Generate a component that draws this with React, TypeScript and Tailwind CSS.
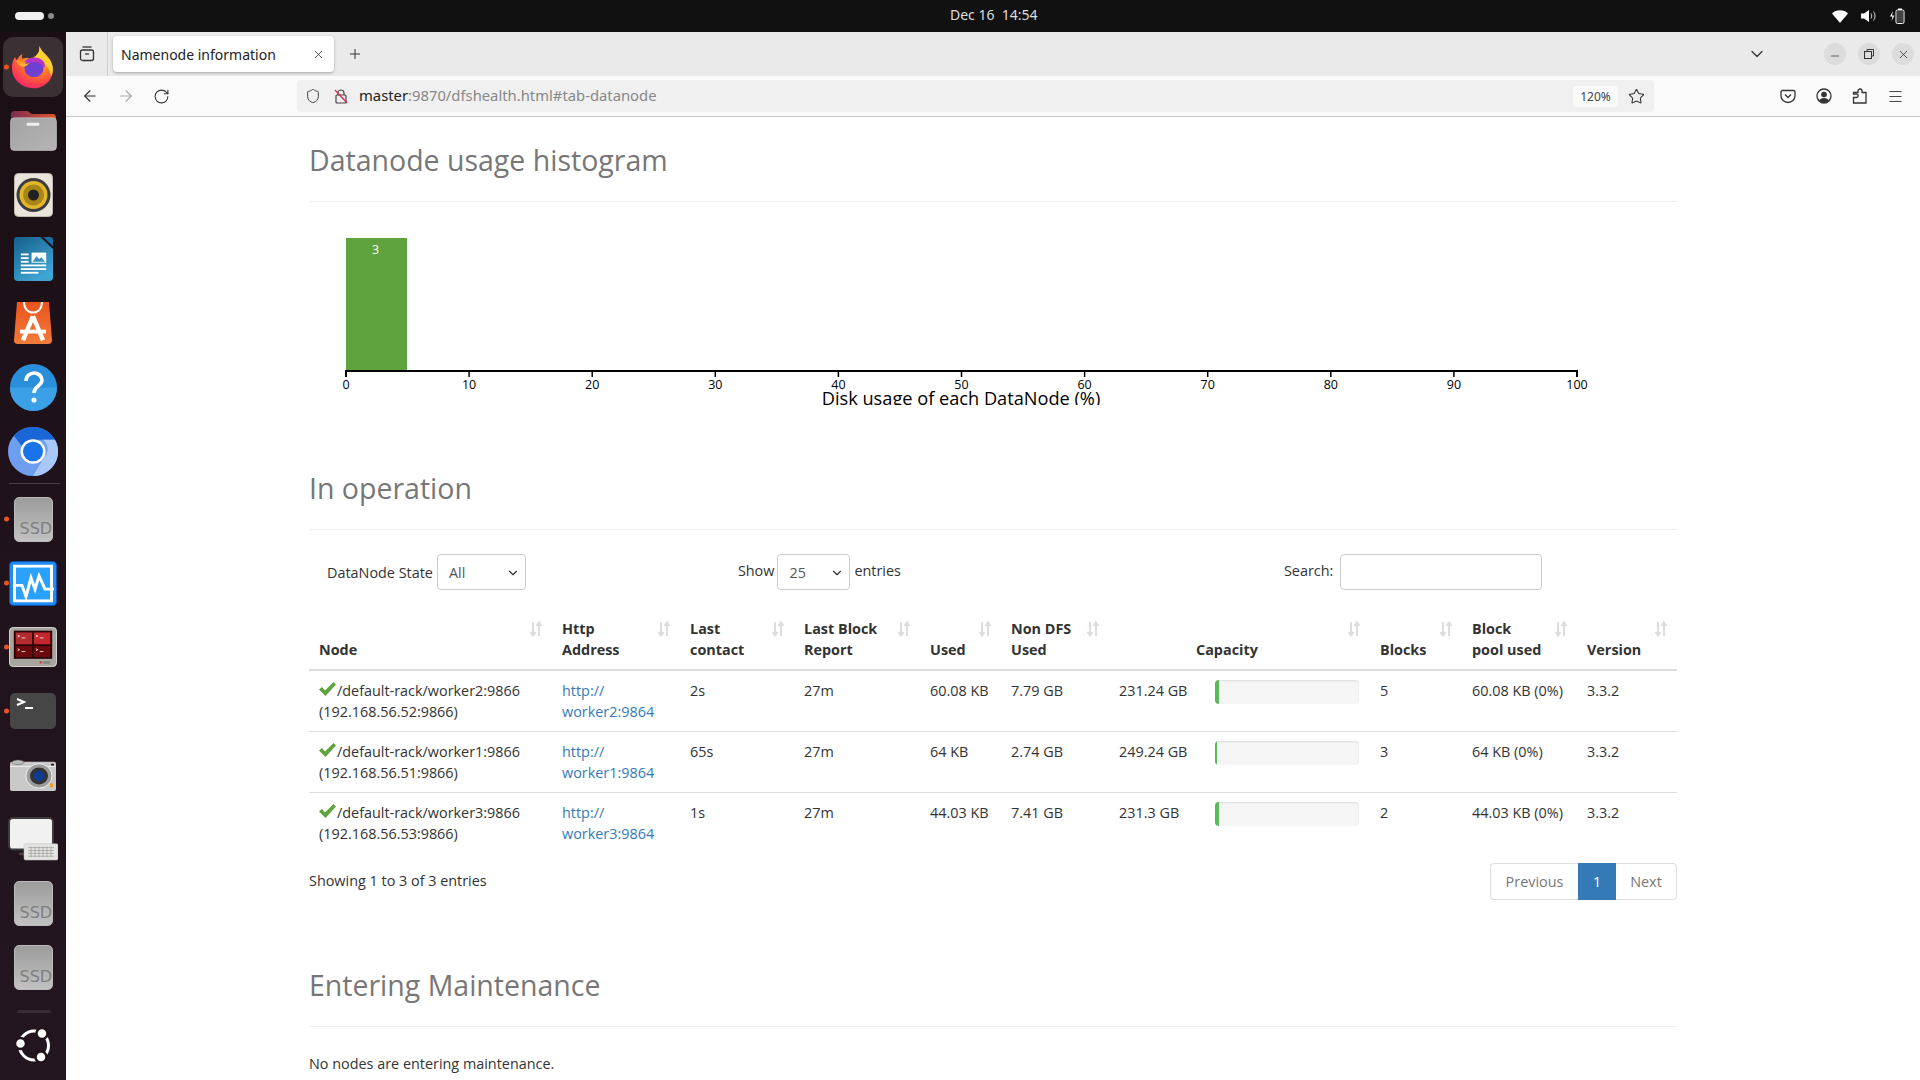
import { ArrowLeft, ArrowRight, ChevronDown, Menu, Minus, Plus, RotateCw, Shield, Star, X } from "lucide-react";

const rows = [
  { node: "worker2", ip: "192.168.56.52", contact: "2s", used: "60.08 KB", nonDfs: "7.79 GB", cap: "231.24 GB", fill: 4, blocks: "5", pool: "60.08 KB (0%)" },
  { node: "worker1", ip: "192.168.56.51", contact: "65s", used: "64 KB", nonDfs: "2.74 GB", cap: "249.24 GB", fill: 2, blocks: "3", pool: "64 KB (0%)" },
  { node: "worker3", ip: "192.168.56.53", contact: "1s", used: "44.03 KB", nonDfs: "7.41 GB", cap: "231.3 GB", fill: 4, blocks: "2", pool: "44.03 KB (0%)" },
];

const ticks = [0, 10, 20, 30, 40, 50, 60, 70, 80, 90, 100];

function Dot() {
  return <span className="absolute left-[4px] top-1/2 h-[5px] w-[5px] -translate-y-1/2 rounded-full bg-[#e95420]" />;
}

function DockItem({ children, running, active }: { children: React.ReactNode; running?: boolean; active?: boolean }) {
  return (
    <div className="relative flex h-[64px] w-[66px] shrink-0 items-center justify-center">
      {active && <span className="absolute left-[3px] top-[2px] h-[60px] w-[60px] rounded-[10px] bg-[#3b3034]" />}
      {running && <Dot />}
      <span className="relative flex">{children}</span>
    </div>
  );
}

function FirefoxIcon() {
  return (
    <svg width="44" height="44" viewBox="0 0 46 48" preserveAspectRatio="none">
      <defs>
        <radialGradient id="ffa" cx="0.65" cy="0.2" r="0.95">
          <stop offset="0" stopColor="#ffde3f" />
          <stop offset="0.4" stopColor="#ff8a1e" />
          <stop offset="0.75" stopColor="#ff3d50" />
          <stop offset="1" stopColor="#e31587" />
        </radialGradient>
      </defs>
      <path d="M30 1c1 6 6 8 10 14 5 8 5 17 0 24-5 6-12 9-18 8C10 46 1 37 1 25c0-5 1-9 3-12l2 4c1-3 3-6 6-7-1 3-1 4 0 5 3-1 6-1 9 0 6-3 9-7 9-14z" fill="url(#ffa)" />
      <path d="M30 1c1 6 6 8 10 14 4 6 5 13 2 19-1-6-5-13-11-17-2-5-2-11-1-16z" fill="#ffcf2e" />
      <path d="M5 17c4-1 7 0 10 3l-3 4c-3-1-5-3-7-7z" fill="#ff9a2b" />
      <circle cx="24" cy="25" r="10" fill="#6e3fd0" />
      <path d="M14 18c4-5 14-6 19-1 2 2 3 5 2 8-3-5-8-7-13-6-3 0-6 0-8-1z" fill="#b833c9" />
      <path d="M8 20c4 1 8 1 12-1l-4 4c-3 1-6 0-8-3z" fill="#ffb52e" />
    </svg>
  );
}

function FolderIcon() {
  return (
    <svg width="47" height="40" viewBox="0 0 48 41" preserveAspectRatio="none">
      <defs>
        <linearGradient id="fold" x1="0" x2="1" y1="0" y2="0">
          <stop offset="0" stopColor="#7a2c52" />
          <stop offset="1" stopColor="#e4572a" />
        </linearGradient>
        <linearGradient id="foldb" x1="0" x2="1" y1="0" y2="1">
          <stop offset="0" stopColor="#a3a3a3" />
          <stop offset="1" stopColor="#b4b4b4" />
        </linearGradient>
      </defs>
      <path d="M1 4a4 4 0 0 1 4-4h13l4 3h21a4 4 0 0 1 4 4v10H1z" fill="url(#fold)" />
      <rect x="0.5" y="7" width="47" height="33.500" rx="4" fill="url(#foldb)" stroke="#ccc" strokeWidth="0.6" />
      <rect x="17" y="12" width="13" height="3" rx="1" fill="#eee" />
    </svg>
  );
}

function RhythmboxIcon() {
  return (
    <svg width="39" height="44" viewBox="0 0 39 44">
      <rect x="0.5" y="0.5" width="38" height="43" rx="4" fill="#e9e5da" stroke="#bdb9ae" />
      <circle cx="19.500" cy="22" r="17" fill="#3c3c3c" />
      <circle cx="19.500" cy="22" r="14" fill="#e2b62a" />
      <circle cx="19.500" cy="22" r="10.500" fill="#a88518" />
      <circle cx="19.500" cy="22" r="5.500" fill="#222" />
    </svg>
  );
}

function WriterIcon() {
  return (
    <svg width="39" height="44" viewBox="0 0 40 48" preserveAspectRatio="none">
      <defs>
        <linearGradient id="wr" x1="0" x2="0.6" y1="0" y2="1">
          <stop offset="0" stopColor="#165f8c" />
          <stop offset="1" stopColor="#3fa6d4" />
        </linearGradient>
      </defs>
      <path d="M3 0h24l13 13v31a4 4 0 0 1-4 4H4a4 4 0 0 1-4-4V3a3 3 0 0 1 3-3z" fill="url(#wr)" />
      <path d="M30 0h7a3 3 0 0 1 3 3v7z" fill="#1a6fa0" />
      <rect x="7" y="18" width="8" height="2" fill="#fff" />
      <rect x="7" y="22" width="8" height="2" fill="#fff" />
      <rect x="7" y="26" width="8" height="2" fill="#fff" />
      <rect x="18" y="17" width="15" height="11" fill="#fff" />
      <path d="M19 27l4-6 3 3 2-2 4 5z" fill="#3a8fbf" />
      <rect x="7" y="30" width="26" height="2" fill="#fff" />
      <rect x="7" y="34" width="26" height="2" fill="#fff" />
      <rect x="7" y="38" width="18" height="2" fill="#fff" />
    </svg>
  );
}

function StoreIcon() {
  return (
    <svg width="38" height="42" viewBox="0 0 38 44" preserveAspectRatio="none">
      <defs>
        <linearGradient id="st" x1="0" x2="0" y1="0" y2="1">
          <stop offset="0" stopColor="#e9541e" />
          <stop offset="1" stopColor="#f47b3a" />
        </linearGradient>
      </defs>
      <path d="M3 0h32l3 40a4 4 0 0 1-4 4H4a4 4 0 0 1-4-4z" fill="url(#st)" />
      <path d="M10 0c0 7 4 11 9 11s9-4 9-11" fill="none" stroke="#fff" strokeWidth="2" />
      <path d="M19 15L9 40M19 15l10 25" stroke="#fff" strokeWidth="4.5" fill="none" />
      <path d="M6 31h26" stroke="#fff" strokeWidth="4" />
    </svg>
  );
}

function HelpIcon() {
  return (
    <svg width="47" height="47" viewBox="0 0 47 47">
      <circle cx="23.5" cy="23.5" r="23.5" fill="#2a8fdb" />
      <path d="M0 23.5a23.5 23.5 0 0 0 47 0z" fill="#3ba0e6" />
      <path d="M16 17c0-5 4-8 8-8s8 3 8 7c0 6-8 6-8 13" fill="none" stroke="#fff" strokeWidth="3.6" />
      <circle cx="24" cy="36" r="2.6" fill="#fff" />
    </svg>
  );
}

function ChromiumIcon() {
  return (
    <svg width="50" height="49" viewBox="0 0 50 50" preserveAspectRatio="none">
      <circle cx="25" cy="25" r="25" fill="#6d9eef" />
      <path d="M25 0a25 25 0 0 1 22 13H25a12 12 0 0 0-11 7L6 9a25 25 0 0 1 19-9z" fill="#1a66d6" />
      <path d="M47 13a25 25 0 0 1-22 37l11-19a12 12 0 0 0-1-18z" fill="#a9c8f8" />
      <circle cx="25" cy="25" r="12.5" fill="#fff" />
      <circle cx="25" cy="25" r="10" fill="#1a73e8" />
    </svg>
  );
}

function SsdIcon() {
  return (
    <div className="relative h-[45px] w-[39px] overflow-hidden rounded-[5px] border border-[#bbb] bg-gradient-to-b from-[#9c9c9c] to-[#c2c2c2]">
      <span className="absolute bottom-[4px] left-[5px] font-['DejaVu_Sans'] text-[16px] leading-none text-[#808080]">SSD</span>
    </div>
  );
}

function MonitorIcon() {
  return (
    <svg width="48" height="45" viewBox="0 0 48 48" preserveAspectRatio="none">
      <rect x="0.5" y="0.5" width="47" height="47" rx="4" fill="#1f8cf5" stroke="#0b4fb0" />
      <rect x="4" y="4" width="40" height="40" fill="#fff" />
      <rect x="7" y="7" width="34" height="34" fill="#2aa1ff" />
      <path d="M7 26h6l4 12 5-20 4 12 4-14 6 14h9" fill="none" stroke="#fff" strokeWidth="3" />
    </svg>
  );
}

function TermGridIcon() {
  return (
    <svg width="48" height="40" viewBox="0 0 50 44" preserveAspectRatio="none">
      <rect x="0.5" y="0.5" width="49" height="43" rx="4" fill="#a8a69e" stroke="#ddd" />
      <rect x="5" y="4" width="40" height="31" fill="#2c0508" />
      <rect x="7" y="6" width="17" height="13" fill="#b52c30" />
      <rect x="26" y="6" width="17" height="13" fill="#c4282e" />
      <rect x="7" y="21" width="17" height="12" fill="#6d0a0e" />
      <rect x="26" y="21" width="17" height="12" fill="#6d0a0e" />
      <path d="M9 9l2 1-2 1M13 12h4M28 9l2 1-2 1M32 12h4M9 24l2 1-2 1M13 27h4M28 24l2 1-2 1M32 27h4" stroke="#fff" strokeWidth="0.8" fill="none" />
      <circle cx="33" cy="39" r="1.2" fill="#d22" />
      <rect x="35" y="37.5" width="8" height="3" fill="#8a8880" />
    </svg>
  );
}

function TerminalIcon() {
  return (
    <svg width="46" height="36" viewBox="0 0 46 36">
      <rect width="46" height="36" rx="5" fill="#464646" />
      <path d="M7 6l7 3-7 3" fill="none" stroke="#fff" strokeWidth="2" />
      <path d="M15 15h8" stroke="#fff" strokeWidth="2" />
    </svg>
  );
}

function CameraIcon() {
  return (
    <svg width="46" height="32" viewBox="0 0 46 34" preserveAspectRatio="none">
      <rect x="0" y="3" width="46" height="31" rx="2" fill="#c9c9c9" />
      <path d="M0 8h46" stroke="#eee" />
      <ellipse cx="8" cy="3.5" rx="6" ry="2.5" fill="#bbb" stroke="#555" strokeWidth="0.5" />
      <circle cx="29" cy="18" r="13" fill="#9c9c9c" stroke="#eee" />
      <circle cx="29" cy="18" r="9" fill="#333" />
      <circle cx="29" cy="18" r="5.5" fill="#0d3c92" />
      <rect x="40" y="26" width="3" height="4" fill="#e8a020" />
      <rect x="41" y="5" width="3" height="2" fill="#222" />
    </svg>
  );
}

function ScreenIcon() {
  return (
    <svg width="50" height="44" viewBox="0 0 50 46" preserveAspectRatio="none">
      <rect x="1" y="1" width="44" height="33" rx="4" fill="#f1f1f1" stroke="#3c3c3c" strokeWidth="2" />
      <rect x="11" y="37" width="14" height="3" rx="1" fill="#444" />
      <rect x="16" y="28" width="34" height="17" rx="1.5" fill="#e4e4e2" stroke="#bbb" strokeWidth="0.5" />
      <path d="M20 32h26M20 35h26M20 38h26M20 41h26M23 31v11M27 31v11M31 31v11M35 31v11M39 31v11M43 31v11" stroke="#9a9a98" strokeWidth="0.7" />
    </svg>
  );
}

function UbuntuIcon() {
  return (
    <svg width="38" height="35" viewBox="0 0 38 35">
      <circle cx="20" cy="17.500" r="14.500" fill="none" stroke="#fff" strokeWidth="3" />
      <circle cx="28" cy="5.500" r="5.500" fill="#fff" stroke="#21131c" strokeWidth="2.500" />
      <circle cx="6.500" cy="15.500" r="5.500" fill="#fff" stroke="#21131c" strokeWidth="2.500" />
      <circle cx="27" cy="29" r="5.500" fill="#fff" stroke="#21131c" strokeWidth="2.500" />
    </svg>
  );
}

function Dock() {
  return (
    <div className="flex w-[66px] shrink-0 flex-col bg-gradient-to-b from-[#1b0f15] to-[#241621] pt-[3px]">
      <DockItem running active><FirefoxIcon /></DockItem>
      <DockItem><FolderIcon /></DockItem>
      <DockItem><RhythmboxIcon /></DockItem>
      <DockItem><WriterIcon /></DockItem>
      <DockItem><StoreIcon /></DockItem>
      <DockItem><HelpIcon /></DockItem>
      <DockItem><ChromiumIcon /></DockItem>
      <div className="relative h-[4px] shrink-0">
        <span className="absolute top-0 left-[9px] h-px w-[51px] bg-[#4a3d45]" />
      </div>
      <DockItem running><SsdIcon /></DockItem>
      <DockItem running><MonitorIcon /></DockItem>
      <DockItem running><TermGridIcon /></DockItem>
      <DockItem running><TerminalIcon /></DockItem>
      <DockItem><CameraIcon /></DockItem>
      <DockItem><ScreenIcon /></DockItem>
      <DockItem><SsdIcon /></DockItem>
      <DockItem><SsdIcon /></DockItem>
      <div className="relative h-[14px] shrink-0">
        <span className="absolute top-[11px] left-[17px] h-[3px] w-[34px] rounded-t-[3px] bg-[#3a2b35]" />
      </div>
      <DockItem><UbuntuIcon /></DockItem>
    </div>
  );
}

function TopBar() {
  return (
    <div className="relative flex h-[32px] shrink-0 items-center justify-between bg-[#111111] pl-[15px] pr-[15px]">
      <div className="flex items-center gap-[4px]">
        <span className="h-[8px] w-[29px] rounded-full bg-[#f0f0f0]" />
        <span className="h-[6px] w-[6px] rounded-full bg-[#8a8a8a]" />
      </div>
      <div className="absolute left-[950px] top-[4px] font-['Noto_Sans'] text-[14px] leading-[22px] text-[#dddddd] whitespace-pre">Dec 16  14:54</div>
      <div className="flex items-center gap-[13px]">
        <svg width="16" height="13" viewBox="0 0 16 13"><path d="M0 3.5C4-.8 12-.8 16 3.5L8 13z" fill="#fff" /></svg>
        <svg width="15" height="14" viewBox="0 0 15 14" fill="none">
          <path d="M0 4.5h3L8 1v12L3 9.500H0z" fill="#fff" />
          <path d="M10 4.500c1 1.500 1 3.500 0 5M12.500 2.500c2 3 2 6 0 9" stroke="#ddd" />
        </svg>
        <svg width="16" height="16" viewBox="0 0 16 16" fill="none">
          <path d="M4 3L1 8.500h2.500L2.500 13 5.500 7.500H3z" fill="#fff" />
          <rect x="7" y="2" width="8" height="13.500" rx="1.500" stroke="#fff" />
          <rect x="9" y="0.500" width="4" height="1.500" fill="#fff" />
          <rect x="8" y="3" width="6" height="11.500" rx="0.500" fill="#ddd" opacity="0.25" />
        </svg>
      </div>
    </div>
  );
}

function WinButton({ children }: { children: React.ReactNode }) {
  return <span className="flex h-[22px] w-[22px] items-center justify-center rounded-full bg-[#dcdcdc] text-[#333]">{children}</span>;
}

function TabBar() {
  return (
    <div className="relative flex h-[44px] shrink-0 items-center bg-[#eaeaea]">
      <div className="flex h-full w-[42px] items-center justify-center border-r border-[#cfcfcf]">
        <svg width="16" height="16" viewBox="0 0 16 16" fill="none" stroke="#333" strokeWidth="1.300">
          <path d="M3.500 1h9" />
          <rect x="1.500" y="4" width="13" height="10.500" rx="2" />
          <path d="M6 8h4" />
        </svg>
      </div>
      <div className="ml-[5px] flex h-[36px] w-[221px] items-center justify-between rounded-[4px] bg-white pl-[8px] pr-[9px] shadow-[0_1px_3px_rgba(0,0,0,0.3)]">
        <span className="font-['Noto_Sans'] text-[14px] text-[#222]">Namenode information</span>
        <X size={13} strokeWidth={1.500} className="text-[#333]" />
      </div>
      <Plus size={16} strokeWidth={1.500} className="ml-[13px] text-[#333]" />
      <div className="ml-auto flex items-center pr-[6px]">
        <ChevronDown size={20} strokeWidth={1.500} className="mr-[57px] text-[#333]" />
        <div className="flex gap-[12px]">
          <WinButton><Minus size={12} strokeWidth={1.500} className="translate-y-[2px]" /></WinButton>
          <WinButton>
            <svg width="10" height="10" viewBox="0 0 10 10" fill="none" stroke="#333"><rect x="0.500" y="2.500" width="7" height="7" /><path d="M3 2.500V0.500h6.500V7H7.500" /></svg>
          </WinButton>
          <WinButton><X size={13} strokeWidth={1.500} /></WinButton>
        </div>
      </div>
    </div>
  );
}

function Toolbar() {
  return (
    <div className="flex h-[41px] shrink-0 items-center border-b border-[#c9c9c9] bg-[#fafafa]">
      <ArrowLeft size={18} strokeWidth={1.500} className="ml-[15px] text-[#333]" />
      <ArrowRight size={18} strokeWidth={1.500} className="ml-[18px] text-[#aaa]" />
      <RotateCw size={17} strokeWidth={1.500} className="ml-[18px] text-[#333]" />
      <div className="ml-[127px] flex h-[32px] w-[1357px] items-center rounded-[4px] bg-[#f0f0f0]">
        <Shield size={16} strokeWidth={1.500} className="ml-[8px] text-[#444]" />
        <svg width="14" height="16" viewBox="0 0 14 16" fill="none" className="ml-[13px]">
          <rect x="2" y="7" width="10" height="8" rx="1" stroke="#444" strokeWidth="1.200" />
          <path d="M4 7V5a3 3 0 0 1 6 0v2" stroke="#444" strokeWidth="1.200" />
          <path d="M1 2l12 13" stroke="#e22850" strokeWidth="1.300" />
        </svg>
        <span className="ml-[11px] -translate-y-px font-['Noto_Sans'] text-[14.800px] text-[#888]"><span className="text-[#222]">master</span>:9870/dfshealth.html#tab-datanode</span>
        <span className="ml-auto flex h-[21px] w-[45px] items-center justify-center rounded-[4px] bg-[#fafafa] font-['Noto_Sans'] text-[12px] text-[#444]">120%</span>
        <Star size={17} strokeWidth={1.500} className="ml-[10px] mr-[9px] text-[#333]" />
      </div>
      <div className="ml-[126px] flex items-center gap-[20px] text-[#333]">
        <svg width="16" height="16" viewBox="0 0 16 16" fill="none" stroke="#333" strokeWidth="1.300">
          <path d="M2.500 2.500h11a1.500 1.500 0 0 1 1.500 1.500v4a7 6.500 0 0 1-14 0V4a1.500 1.500 0 0 1 1.500-1.500z" />
          <path d="M5 6.500l3 3 3-3" />
        </svg>
        <svg width="16" height="16" viewBox="0 0 16 16" fill="none">
          <circle cx="8" cy="8" r="7" stroke="#333" strokeWidth="1.300" />
          <circle cx="8" cy="6.500" r="2.800" fill="#333" />
          <path d="M3 12.500c1.500-3.500 8.500-3.500 10 0-2.500 2.500-7.500 2.500-10 0z" fill="#333" />
        </svg>
        <svg width="15" height="16" viewBox="0 0 15 16" fill="none" stroke="#333" strokeWidth="1.300">
          <path d="M1.500 15V9.500H4.500a1.700 1.700 0 0 0 0-3.400H1.500V4.500H6V3a2 2 0 0 1 4 0v1.500h4V15z" />
        </svg>
        <Menu size={17} strokeWidth={1.300} />
      </div>
    </div>
  );
}

function Heading({ children }: { children: React.ReactNode }) {
  return <h2 className="border-b border-[#eeeeee] pb-[25px] text-[28.500px] font-normal leading-[32px] text-[#777777]">{children}</h2>;
}

function Histogram() {
  return (
    <svg width="1368" height="203" className="block">
      <rect x="37" y="36" width="61" height="132" fill="#5fa33e" />
      <text x="66.500" y="52" textAnchor="middle" fontSize="12.500" fill="#fff">3</text>
      <path d="M37 175v-6h1231v6" fill="none" stroke="#000" strokeWidth="2" />
      {ticks.map((t) => (
        <g key={t}>
          <line x1={37 + t * 12.31} x2={37 + t * 12.31} y1="169" y2="175" stroke="#000" strokeWidth="1.500" />
          <text x={37 + t * 12.31} y="187" textAnchor="middle" fontSize="12.500" fill="#000">{t}</text>
        </g>
      ))}
      <text x="652" y="203" textAnchor="middle" fontSize="18.200" fill="#000">Disk usage of each DataNode (%)</text>
    </svg>
  );
}

function SortIcon() {
  return (
    <svg width="14" height="16" viewBox="0 0 14 16" fill="none" stroke="#dddddd" strokeWidth="2" className="absolute right-[9px] top-[14px]">
      <path d="M4 1v13M1.500 11L4 14.500 6.500 11" />
      <path d="M10 15V2M7.500 5L10 1.500 12.500 5" />
    </svg>
  );
}

function Th({ children, className = "" }: { children: React.ReactNode; className?: string }) {
  return (
    <th className={`relative border-b-2 border-[#dddddd] pb-[9px] pt-[11px] align-bottom font-bold ${className || "px-[10px] text-left"}`}>
      {children}
      <SortIcon />
    </th>
  );
}

function Td({ children }: { children: React.ReactNode }) {
  return <td className="border-b border-[#dddddd] px-[10px] pb-[9px] pt-[9px] align-top group-last:border-transparent">{children}</td>;
}

function DatanodeTable() {
  return (
    <table className="mt-[17px] w-[1368px] table-fixed border-collapse text-left">
      <colgroup>
        <col className="w-[243px]" />
        <col className="w-[128px]" />
        <col className="w-[114px]" />
        <col className="w-[126px]" />
        <col className="w-[81px]" />
        <col className="w-[108px]" />
        <col className="w-[261px]" />
        <col className="w-[92px]" />
        <col className="w-[115px]" />
        <col className="w-[100px]" />
      </colgroup>
      <thead>
        <tr>
          <Th>Node</Th>
          <Th>Http<br />Address</Th>
          <Th>Last<br />contact</Th>
          <Th>Last Block<br />Report</Th>
          <Th>Used</Th>
          <Th>Non DFS<br />Used</Th>
          <Th className="pl-[87px] pr-[10px] text-left">Capacity</Th>
          <Th>Blocks</Th>
          <Th>Block<br />pool used</Th>
          <Th>Version</Th>
        </tr>
      </thead>
      <tbody>
        {rows.map((r) => (
          <tr key={r.node} className="group">
            <Td>
              <span className="whitespace-nowrap">
                <svg width="17" height="14" viewBox="0 0 17 14" className="mr-px inline-block -translate-y-[3px] align-middle">
                  <path d="M0 7.500L3 5l3 3.500L14.500 0 17 2.500 6.500 14z" fill="#5fa33e" />
                </svg>
                /default-rack/{r.node}:9866
              </span>
              <br />({r.ip}:9866)
            </Td>
            <Td>
              <a className="text-[#337ab7]" href="#">http://<br />{r.node}:9864</a>
            </Td>
            <Td>{r.contact}</Td>
            <Td>27m</Td>
            <Td>{r.used}</Td>
            <Td>{r.nonDfs}</Td>
            <Td>
              <div className="flex">
                <span className="w-[96px] shrink-0">{r.cap}</span>
                <div className="h-[24px] w-[144px] overflow-hidden rounded-[4px] bg-[#f5f5f5] shadow-[inset_0_1px_2px_rgba(0,0,0,0.1)]">
                  <div className="h-full bg-[#5cb85c]" style={{ width: r.fill }} />
                </div>
              </div>
            </Td>
            <Td>{r.blocks}</Td>
            <Td>{r.pool}</Td>
            <Td>3.3.2</Td>
          </tr>
        ))}
      </tbody>
    </table>
  );
}

function SelectBox({ value, width }: { value: string; width: string }) {
  return (
    <span className={`relative inline-block ${width}`}>
      <select defaultValue={value} className="h-[36px] w-full appearance-none rounded-[4px] border border-[#cccccc] bg-white pl-[11px] text-[#555555]">
        <option>{value}</option>
      </select>
      <ChevronDown size={14} strokeWidth={2} className="pointer-events-none absolute right-[6px] top-[12px] text-[#333]" />
    </span>
  );
}

function Controls() {
  return (
    <div className="mt-[24px] flex h-[36px] items-center">
      <span className="ml-[18px] mr-[4px]">DataNode State</span>
      <SelectBox value="All" width="w-[89px]" />
      <span className="ml-[212px] mr-[3px] -translate-y-[2px]">Show</span>
      <SelectBox value="25" width="w-[73px]" />
      <span className="ml-[4px] -translate-y-[2px]">entries</span>
      <span className="ml-[383px] mr-[7px] -translate-y-[2px]">Search:</span>
      <input className="h-[36px] w-[202px] rounded-[4px] border border-[#cccccc] bg-white" />
    </div>
  );
}

function Pagination() {
  return (
    <div className="flex h-[37px] items-stretch">
      <span className="flex w-[88px] items-center justify-center rounded-l-[4px] border border-r-0 border-[#dddddd] text-[#777777]">Previous</span>
      <span className="flex w-[38px] items-center justify-center bg-[#337ab7] text-white">1</span>
      <span className="flex w-[61px] items-center justify-center rounded-r-[4px] border border-l-0 border-[#dddddd] text-[#777777]">Next</span>
    </div>
  );
}

export default function App() {
  return (
    <div className="flex h-[1080px] w-[1920px] flex-col overflow-hidden bg-white font-['Open_Sans',sans-serif] text-[14.400px] leading-[21px] text-[#333333]">
      <TopBar />
      <div className="flex min-h-0 flex-1">
        <Dock />
        <div className="flex min-w-0 flex-1 flex-col">
          <TabBar />
          <Toolbar />
          <div className="ml-[243px] w-[1368px] flex-1 overflow-hidden pt-[27px]">
            <Heading>Datanode usage histogram</Heading>
            <Histogram />
            <div className="mt-[67px]">
              <Heading>In operation</Heading>
            </div>
            <Controls />
            <DatanodeTable />
            <div className="mt-[9px] flex items-start justify-between">
              <span className="pt-[7px]">Showing 1 to 3 of 3 entries</span>
              <Pagination />
            </div>
            <div className="mt-[69px]">
              <Heading>Entering Maintenance</Heading>
            </div>
            <p className="mt-[26px]">No nodes are entering maintenance.</p>
          </div>
        </div>
      </div>
    </div>
  );
}
